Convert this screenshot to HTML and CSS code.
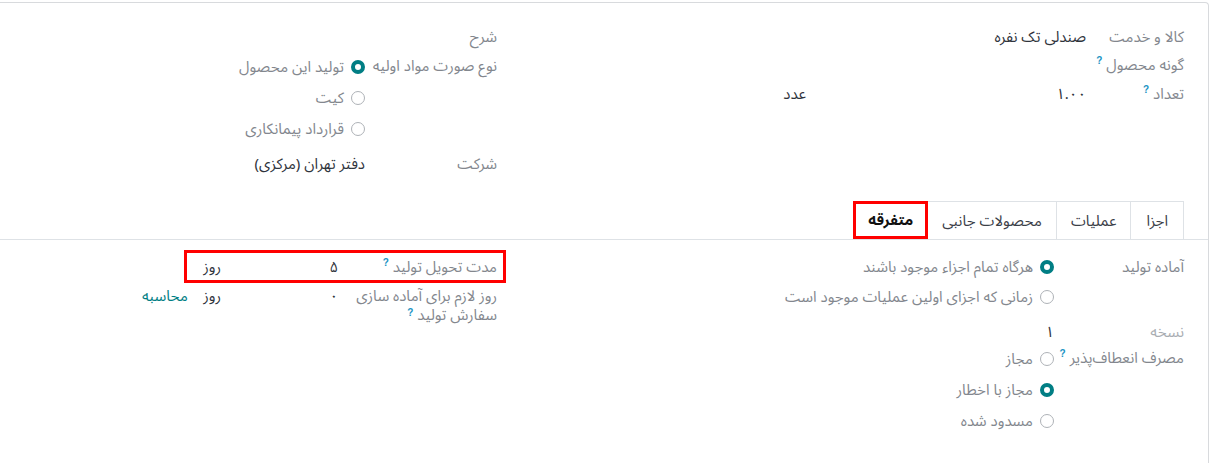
FILE: index.html
```html
<!DOCTYPE html>
<html lang="fa" dir="rtl">
<head>
    <meta charset="UTF-8">
    <meta name="viewport" content="width=device-width, initial-scale=1.0">
    <title>فهرست مواد اولیه</title>
    <link rel="stylesheet" href="styles.css">
</head>
<body>
    <div class="sheet">
        <div class="group top">
            <div class="col main">
                <div class="row h28">
                    <div class="label w98">کالا و خدمت</div>
                    <div class="value">صندلی تک نفره</div>
                </div>
                <div class="row h28">
                    <div class="label w98">گونه محصول<sup>?</sup></div>
                    <div class="value"></div>
                </div>
                <div class="row h30">
                    <div class="label w98">تعداد<sup>?</sup></div>
                    <div class="value"><span class="qty">۱.۰۰</span><span>عدد</span></div>
                </div>
            </div>
            <div class="col">
                <div class="row h28">
                    <div class="label w132">شرح</div>
                    <div class="value"></div>
                </div>
                <div class="row start">
                    <div class="label w132 lh31">نوع صورت مواد اولیه</div>
                    <div class="radios">
                        <div class="opt h31"><span class="radio on"></span>تولید این محصول</div>
                        <div class="opt h31"><span class="radio"></span>کیت</div>
                        <div class="opt h31"><span class="radio"></span>قرارداد پیمانکاری</div>
                    </div>
                </div>
                <div class="row h31 mt4">
                    <div class="label w132">شرکت</div>
                    <div class="value">دفتر تهران (مرکزی)</div>
                </div>
            </div>
        </div>

        <div class="tabs">
            <div class="tab">اجزا</div>
            <div class="tab">عملیات</div>
            <div class="tab">محصولات جانبی</div>
            <div class="tab active">متفرقه</div>
        </div>

        <div class="group bottom">
            <div class="col wide">
                <div class="row start">
                    <div class="label w130 lh30">آماده تولید</div>
                    <div class="radios">
                        <div class="opt h30"><span class="radio on"></span>هرگاه تمام اجزاء موجود باشند</div>
                        <div class="opt h30"><span class="radio"></span>زمانی که اجزای اولین عملیات موجود است</div>
                    </div>
                </div>
                <div class="row h22 mt9">
                    <div class="label w130 faint">نسخه</div>
                    <div class="value">۱</div>
                </div>
                <div class="row start">
                    <div class="label w130 lh31">مصرف انعطاف‌پذیر<sup>?</sup></div>
                    <div class="radios">
                        <div class="opt h31"><span class="radio"></span>مجاز</div>
                        <div class="opt h31"><span class="radio on"></span>مجاز با اخطار</div>
                        <div class="opt h31"><span class="radio"></span>مسدود شده</div>
                    </div>
                </div>
            </div>
            <div class="col">
                <div class="row hl">
                    <div class="label w146">مدت تحویل تولید<sup>?</sup></div>
                    <div class="value num">۵</div>
                    <div class="value unit">روز</div>
                </div>
                <div class="row start lead">
                    <div class="label w146">
                        <div class="line">روز لازم برای آماده سازی</div>
                        <div class="line">سفارش تولید<sup class="low">?</sup></div>
                    </div>
                    <div class="value num line">۰</div>
                    <div class="value unit line">روز</div>
                    <a class="link line">محاسبه</a>
                </div>
            </div>
        </div>
    </div>
</body>
</html>
```

FILE: styles.css
```css
*{
    margin: 0;
    padding: 0;
    box-sizing: border-box;
}
body{
    background: #fff;
    font-family: "Noto Sans Arabic", "Vazirmatn", "DejaVu Sans", sans-serif;
    font-size: 15px;
    color: #2f343c;
    overflow: hidden;
}
.sheet{
    direction: rtl;
    margin-top: 2px;
    width: 1209px;
    min-height: 480px;
    padding: 20px 24px 0 0;
    background: #fff;
    border: 1px solid #d8dadd;
    border-left: none;
    border-bottom: none;
    border-radius: 0 4px 0 0;
}
.group{
    display: flex;
}
.top .main{
    width: 687px;
}
.bottom{
    padding-top: 12px;
}
.bottom .wide{
    width: 678px;
}
.row{
    display: flex;
    align-items: center;
}
.row.start{
    align-items: flex-start;
}
.label{
    flex-shrink: 0;
    color: #83878e;
}
.label.faint{
    color: #a9adb2;
}
sup{
    font-family: "Liberation Sans", sans-serif;
    font-size: 10px;
    font-weight: bold;
    color: #1a93c4;
    margin-right: 4px;
    vertical-align: 6px;
    line-height: 0;
}
sup.low{
    vertical-align: 4px;
}
.value{
    color: #2f343c;
}
.w98{ width: 98px; }
.w130{ width: 130px; }
.w132{ width: 132px; }
.w146{ width: 146px; }
.h22{ height: 22px; }
.h28{ height: 28px; }
.h30{ height: 30px; }
.h31{ height: 31px; }
.lh30{ line-height: 30px; }
.lh31{ line-height: 31px; }
.mt4{ margin-top: 4px; }
.mt9{ margin-top: 9px; }
.line{
    height: 19px;
    line-height: 19px;
    white-space: nowrap;
}
.qty{
    display: inline-block;
    width: 280px;
}
.opt{
    display: flex;
    align-items: center;
    gap: 7px;
    color: #83878e;
}
.radio{
    width: 14px;
    height: 14px;
    border-radius: 50%;
    border: 1px solid #aeb2b7;
    background: #fff;
}
.radio.on{
    border: 4.5px solid #017e84;
}
.tabs{
    display: flex;
    margin: 22px -24px 0 0;
    padding-right: 24px;
    border-bottom: 1px solid #dee2e6;
}
.tab{
    height: 38px;
    padding: 0 14px;
    display: flex;
    align-items: center;
    border: 1px solid #dee2e6;
    border-bottom: none;
    margin-left: -1px;
    color: #3b4048;
}
.tab:first-child{
    padding: 0 15px;
}
.tab.active{
    border: 3px solid #f00;
    padding: 0 12px;
    font-weight: bold;
    color: #111;
}
.hl{
    width: 322px;
    height: 33px;
    margin-top: -2px;
    padding-right: 6px;
    border: 3px solid #f00;
}
.lead{
    margin-top: 4px;
    padding-right: 9px;
}
.num{
    width: 130px;
    padding-right: 13px;
}
.unit{
    width: 33px;
}
.link{
    color: #017e84;
    cursor: pointer;
}
```
